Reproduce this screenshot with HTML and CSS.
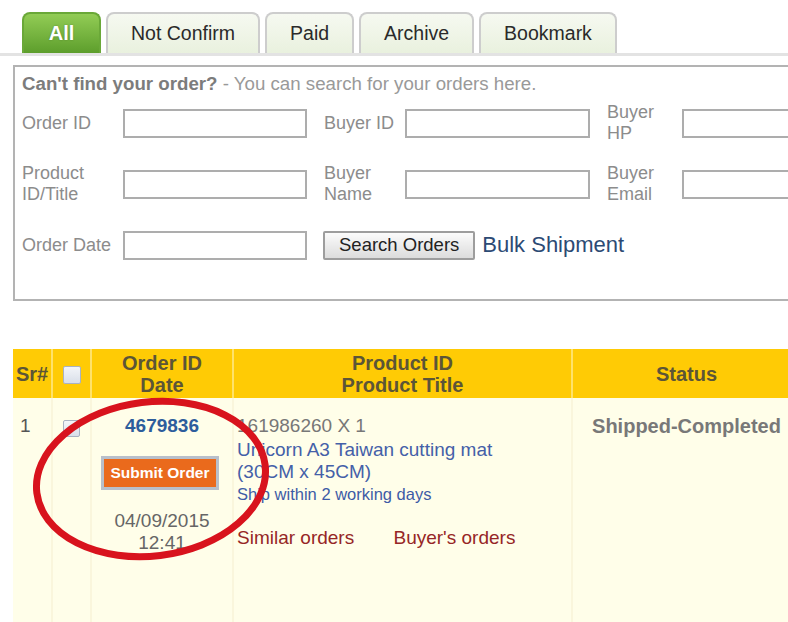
FILE: index.html
```html
<!DOCTYPE html>
<html lang="en">
<head>
    <meta charset="UTF-8">
    <title>My Orders</title>
    <link rel="stylesheet" href="styles.css">
</head>
<body>
    <div class="page">
        <ul class="tabs">
            <li class="tab active">All</li>
            <li class="tab">Not Confirm</li>
            <li class="tab">Paid</li>
            <li class="tab">Archive</li>
            <li class="tab">Bookmark</li>
        </ul>

        <div class="search-box">
            <p class="search-title"><strong>Can't find your order?</strong> - You can search for your orders here.</p>
            <div class="search-grid">
                <label class="field-label">Order ID</label>
                <input type="text" class="field">
                <label class="field-label pad">Buyer ID</label>
                <input type="text" class="field">
                <label class="field-label pad">Buyer<br>HP</label>
                <input type="text" class="field">

                <label class="field-label">Product<br>ID/Title</label>
                <input type="text" class="field">
                <label class="field-label pad">Buyer<br>Name</label>
                <input type="text" class="field">
                <label class="field-label pad">Buyer<br>Email</label>
                <input type="text" class="field">

                <label class="field-label">Order Date</label>
                <input type="text" class="field">
                <div class="search-actions">
                    <button class="search-btn">Search Orders</button>
                    <a href="#" class="bulk-link">Bulk Shipment</a>
                </div>
            </div>
        </div>

        <div class="orders-wrap">
            <table class="orders">
                <colgroup>
                    <col class="c-sr">
                    <col class="c-chk">
                    <col class="c-id">
                    <col class="c-prod">
                    <col class="c-status">
                </colgroup>
                <thead>
                    <tr>
                        <th>Sr#</th>
                        <th><span class="check"></span></th>
                        <th>Order ID<br>Date</th>
                        <th>Product ID<br>Product Title</th>
                        <th>Status</th>
                    </tr>
                </thead>
                <tbody>
                    <tr>
                        <td class="sr">1</td>
                        <td class="chk"><span class="check"></span></td>
                        <td class="order-cell">
                            <a href="#" class="order-id">4679836</a>
                            <div><span class="submit-btn">Submit Order</span></div>
                            <div class="order-date">04/09/2015<br>12:41</div>
                        </td>
                        <td class="product-cell">
                            <div class="product-id">161986260 X 1</div>
                            <a href="#" class="product-title">Unicorn A3 Taiwan cutting mat<br>(30CM x 45CM)</a>
                            <div class="ship-note">Ship within 2 working days</div>
                            <div class="order-links">
                                <a href="#">Similar orders</a>
                                <a href="#">Buyer's orders</a>
                            </div>
                        </td>
                        <td class="status">Shipped-Completed</td>
                    </tr>
                </tbody>
            </table>

            <svg class="circle-mark" width="300" height="240" viewBox="0 0 300 240">
                <ellipse cx="151" cy="130" rx="115" ry="77" transform="rotate(-7 151 130)" fill="none" stroke="#d8131d" stroke-width="7"/>
            </svg>
        </div>
    </div>
</body>
</html>
```

FILE: styles.css
```css
* {
    box-sizing: border-box;
}
body {
    margin: 0;
    background: #fff;
    font-family: "Liberation Sans", Arial, sans-serif;
    overflow: hidden;
}
.page {
    width: 840px;
}

/* tabs */
.tabs {
    list-style: none;
    margin: 0;
    padding: 12px 0 0 22px;
    display: flex;
    gap: 5px;
    border-bottom: 3px solid #e3e3e3;
}
.tab {
    height: 41px;
    padding: 0 23px;
    display: flex;
    align-items: center;
    justify-content: center;
    border: 2px solid #cdcdcd;
    border-bottom: none;
    border-radius: 8px 8px 0 0;
    background: linear-gradient(#f6f9f1, #e9f1de);
    color: #2a2a2a;
    font-size: 19.5px;
}
.tab.active {
    min-width: 79px;
    border-color: #6aa838;
    background: linear-gradient(#92cc55, #5d9e2c);
    color: #fff;
    font-weight: bold;
    font-size: 20px;
    text-shadow: 0 0 2px rgba(0, 0, 0, 0.25);
}

/* search box */
.search-box {
    margin: 9px 0 0 13px;
    width: 830px;
    border: 2px solid #b3b3b3;
    padding: 6px 0 32px 7px;
    color: #8c8c8c;
}
.search-title {
    margin: 0;
    font-size: 18.7px;
    line-height: 22px;
    color: #999;
}
.search-title strong {
    color: #7c7c7c;
}
.search-grid {
    margin-top: 6px;
    display: grid;
    grid-template-columns: 101px 184px 98px 185px 92px 200px;
    grid-auto-rows: 44px;
    row-gap: 17px;
    align-items: center;
}
.field-label {
    font-size: 18px;
    line-height: 21px;
}
.field-label.pad {
    padding-left: 17px;
}
.field {
    width: 100%;
    height: 29px;
    border: 2px solid #adadad;
    background: #fff;
}
.search-actions {
    grid-column: 3 / span 4;
    padding-left: 16px;
    display: flex;
    align-items: center;
}
.search-btn {
    height: 29px;
    padding: 0 14px;
    border: 2px solid #9d9d9d;
    border-radius: 2px;
    background: linear-gradient(#fbfbfb, #dcdcdc);
    color: #222;
    font-family: inherit;
    font-size: 18.5px;
}
.bulk-link {
    margin-left: 7px;
    color: #2c4a74;
    font-size: 22px;
    text-decoration: none;
}

/* orders table */
.orders-wrap {
    position: relative;
    margin-top: 48px;
}
.orders {
    margin-left: 13px;
    width: 788px;
    table-layout: fixed;
    border-collapse: collapse;
    font-size: 19px;
    line-height: 22px;
}
.c-sr { width: 39px; }
.c-chk { width: 39px; }
.c-id { width: 142px; }
.c-prod { width: 339px; }
.c-status { width: 229px; }
.orders th {
    height: 49px;
    padding: 0;
    background: #ffcb05;
    border-right: 2px solid #ffe26a;
    color: #5c5537;
    font-size: 20px;
    font-weight: bold;
    text-align: center;
}
.orders td {
    height: 240px;
    padding: 17px 0 0;
    vertical-align: top;
    background: #fffee9;
    border-right: 2px solid #faf6dc;
}
.check {
    display: inline-block;
    width: 18px;
    height: 18px;
    vertical-align: middle;
    border: 1px solid #a9b2c2;
    border-radius: 2px;
    background: linear-gradient(#f3f5f9, #d9dfe9);
}
.sr {
    padding-left: 7px !important;
    color: #555;
}
.chk {
    text-align: center;
}
.chk .check {
    margin-top: 4px;
    width: 17px;
    height: 17px;
}
.order-cell {
    text-align: center;
}
.order-id {
    color: #2d5d9c;
    font-weight: bold;
    text-decoration: none;
}
.submit-btn {
    display: inline-block;
    margin-top: 19px;
    margin-right: 4px;
    padding: 0 6px;
    border: 3px solid #b8bfca;
    background: #ea6a1c;
    color: #fff;
    font-size: 15.5px;
    font-weight: bold;
    line-height: 28px;
}
.order-date {
    margin-top: 20px;
    color: #666;
}
.product-cell {
    padding-left: 3px !important;
}
.product-id {
    margin-bottom: 2px;
    color: #777;
}
.product-title {
    color: #4460a8;
    text-decoration: none;
}
.ship-note {
    color: #3d5ba6;
    font-size: 16.5px;
}
.order-links {
    margin-top: 22px;
}
.order-links a {
    margin-right: 34px;
    color: #962626;
    text-decoration: none;
}
.status {
    text-align: center;
    color: #787878;
    font-size: 20px;
    font-weight: bold;
}

/* red hand-drawn marker over the first order */
.circle-mark {
    position: absolute;
    left: 0;
    top: 0;
}
```
